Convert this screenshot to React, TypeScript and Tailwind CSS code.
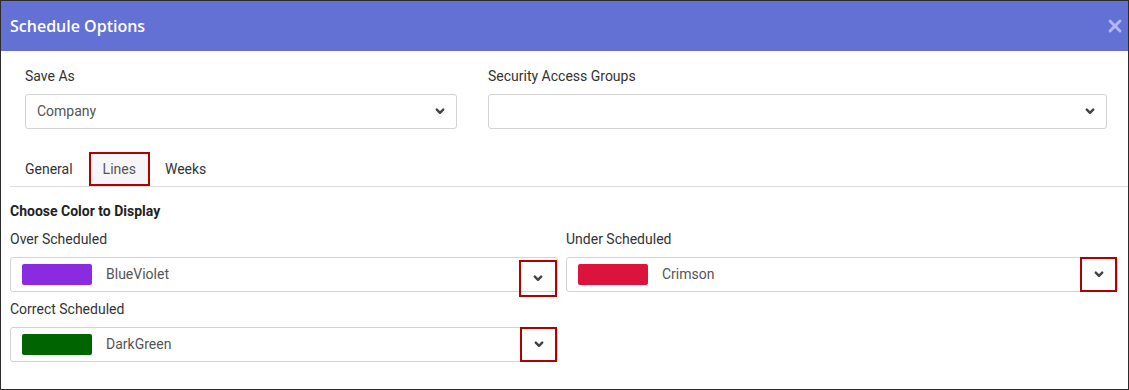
import { X } from 'lucide-react';

const font = { fontFamily: 'Roboto, "Liberation Sans", sans-serif' };

function Chevron({ className = '' }: { className?: string }) {
  return (
    <svg width="10" height="7" viewBox="0 0 10 7" className={className}>
      <polyline points="1.8,1.6 5,4.8 8.2,1.6" fill="none" stroke="#444" strokeWidth="2.4" strokeLinecap="round" strokeLinejoin="round" />
    </svg>
  );
}

function PlainSelect({ value }: { value?: string }) {
  return (
    <div className="flex h-[35px] items-center justify-between rounded-[3px] border border-[#d3d3d3] bg-white pl-[11px] pr-[11px]">
      <span className="text-[14px] text-[#555]">{value}</span>
      <Chevron />
    </div>
  );
}

function ColorSelect({ color, name, shift = false }: { color: string; name: string; shift?: boolean }) {
  return (
    <div className="relative flex h-[35px] items-center rounded-[3px] border border-[#d3d3d3] bg-white pl-[11px]">
      <span className="h-[21px] w-[70px] rounded-[2px]" style={{ backgroundColor: color }} />
      <span className="ml-[14px] text-[14px] text-[#555]">{name}</span>
      {/* highlighted dropdown trigger */}
      <div
        className={
          shift
            ? 'absolute right-0 top-[2px] flex h-[37px] w-[38px] items-center justify-center border-2 border-[#b00000]'
            : 'absolute right-0 top-[-1px] flex h-[35px] w-[37px] items-center justify-center border-2 border-[#b00000]'
        }
      >
        <Chevron />
      </div>
    </div>
  );
}

export default function App() {
  const tabs = ['General', 'Lines', 'Weeks'];
  return (
    <div className="h-[390px] w-[1129px] overflow-hidden border border-[#2b2b2b] bg-white text-[#333]" style={font}>
      <div className="flex h-[50px] items-center justify-between bg-[#6370d4] pl-[9px] pr-[3px]">
        <h1 className="text-[16px] font-semibold text-white" style={{ fontFamily: '"Open Sans", sans-serif' }}>
          Schedule Options
        </h1>
        <X size={20} strokeWidth={3.4} className="text-[#b2b8ef]" />
      </div>

      <div className="flex gap-[31px] pl-[24px] pr-[21px] pt-[15px]">
        <div className="w-[432px]">
          <div className="h-[20px] text-[14px] leading-[20px]">Save As</div>
          <div className="mt-[8px]">
            <PlainSelect value="Company" />
          </div>
        </div>
        <div className="flex-1">
          <div className="h-[20px] text-[14px] leading-[20px]">Security Access Groups</div>
          <div className="mt-[8px]">
            <PlainSelect />
          </div>
        </div>
      </div>

      <div className="ml-[9px] mt-[23px] flex border-b border-[#dedede]">
        {tabs.map((t) => (
          <div
            key={t}
            className={
              t === 'Lines'
                ? 'flex h-[34px] items-center border-2 border-[#b00000] bg-[#f6f6f9] px-[12px] text-[14px] text-[#555]'
                : 'flex h-[34px] items-center border-2 border-transparent pl-[13px] pr-[14px] text-[14px] text-[#333]'
            }
          >
            {t}
          </div>
        ))}
      </div>

      <div className="pl-[9px] pr-[10px] pt-[14px]">
        <div className="h-[20px] text-[14px] font-bold leading-[20px] text-[#222]">Choose Color to Display</div>
        <div className="mt-[8px] grid grid-cols-[548px_1fr] gap-x-[8px]">
          <div>
            <div className="h-[20px] text-[14px] leading-[20px]">Over Scheduled</div>
            <div className="mt-[8px]">
              <ColorSelect color="#8a2be2" name="BlueViolet" shift />
            </div>
            <div className="mt-[7px] h-[20px] text-[14px] leading-[20px]">Correct Scheduled</div>
            <div className="mt-[8px]">
              <ColorSelect color="#006400" name="DarkGreen" />
            </div>
          </div>
          <div>
            <div className="h-[20px] text-[14px] leading-[20px]">Under Scheduled</div>
            <div className="mt-[8px]">
              <ColorSelect color="#dc143c" name="Crimson" />
            </div>
          </div>
        </div>
      </div>
    </div>
  );
}
